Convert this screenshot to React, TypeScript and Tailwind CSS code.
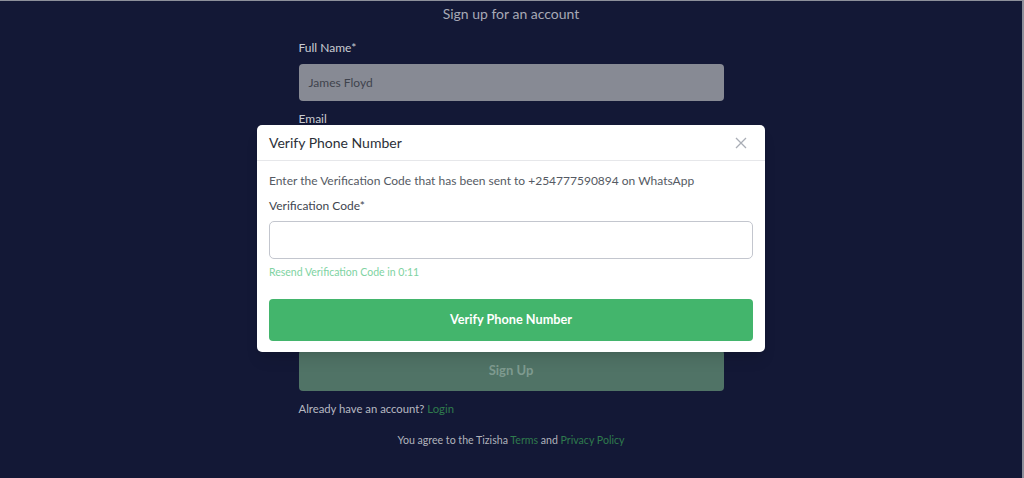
import React from 'react';

const font = { fontFamily: 'Lato, "Open Sans", sans-serif' };

function Field({ label, value }: { label: string; value?: string }) {
  return (
    <div className="flex flex-col">
      <label className="h-[16px] text-[12px] leading-[16px] text-[#c9cbd2]">{label}</label>
      <div className="mt-[8px] h-[37px] rounded-[4px] bg-[#878a94] px-[10px] flex items-center text-[12px] text-[#3f434d]">
        {value}
      </div>
    </div>
  );
}

function VerifyModal() {
  return (
    <div className="absolute left-[257px] top-[124px] w-[508px] rounded-[5px] bg-white shadow-lg">
      <div className="flex h-[36px] items-center justify-between border-b border-[#e6e7ea] px-[12px]">
        <span className="text-[14px] text-[#2c3038]">Verify Phone Number</span>
        <svg width="12" height="12" viewBox="0 0 12 12" className="mr-[6px]">
          <path d="M1 1L11 11M11 1L1 11" stroke="#a9adb5" strokeWidth="1.3" />
        </svg>
      </div>
      <div className="px-[12px] pt-[12px] pb-[11px]">
        <p className="text-[12px] leading-[16px] text-[#555a63]">
          Enter the Verification Code that has been sent to +254777590894 on WhatsApp
        </p>
        <p className="mt-[9px] text-[12px] leading-[16px] text-[#41464f]">Verification Code*</p>
        <div className="mt-[7px] h-[38px] rounded-[5px] border border-[#c3c6ce] bg-white" />
        <p className="mt-[6px] text-[10.5px] leading-[14px] text-[#80d3a2]">Resend Verification Code in 0:11</p>
        <button className="mt-[20px] h-[42px] w-full rounded-[4px] bg-[#43b56c] text-[12.7px] font-bold text-white">
          Verify Phone Number
        </button>
      </div>
    </div>
  );
}

export default function App() {
  return (
    <div
      className="relative h-[478px] w-full overflow-hidden border-t border-r-2 border-[#8d909b] bg-[#131836]"
      style={font}
    >
      <h1 className="pt-[4px] text-center text-[14px] leading-[18px] text-[#a7a9b5]">Sign up for an account</h1>
      <div className="mx-auto mt-[17px] flex w-[425px] flex-col gap-[10px]">
        <Field label="Full Name*" value="James Floyd" />
        <Field label="Email" />
        <Field label="Phone Number*" />
        <Field label="Password*" />
      </div>
      <div className="mx-auto mt-[36px] w-[425px]">
        <button className="h-[41px] w-full rounded-[4px] bg-[#507366] text-[13px] font-bold text-[#7f9b90]">
          Sign Up
        </button>
        <p className="mt-[11px] text-[11.3px] leading-[14px] text-[#b7b9c2]">
          Already have an account? <span className="text-[#2f7b4d]">Login</span>
        </p>
        <p className="mt-[17px] text-center text-[10.6px] leading-[14px] text-[#b1b3bc]">
          You agree to the Tizisha <span className="text-[#2f7b4d]">Terms</span> and{' '}
          <span className="text-[#2f7b4d]">Privacy Policy</span>
        </p>
      </div>
      <VerifyModal />
    </div>
  );
}
